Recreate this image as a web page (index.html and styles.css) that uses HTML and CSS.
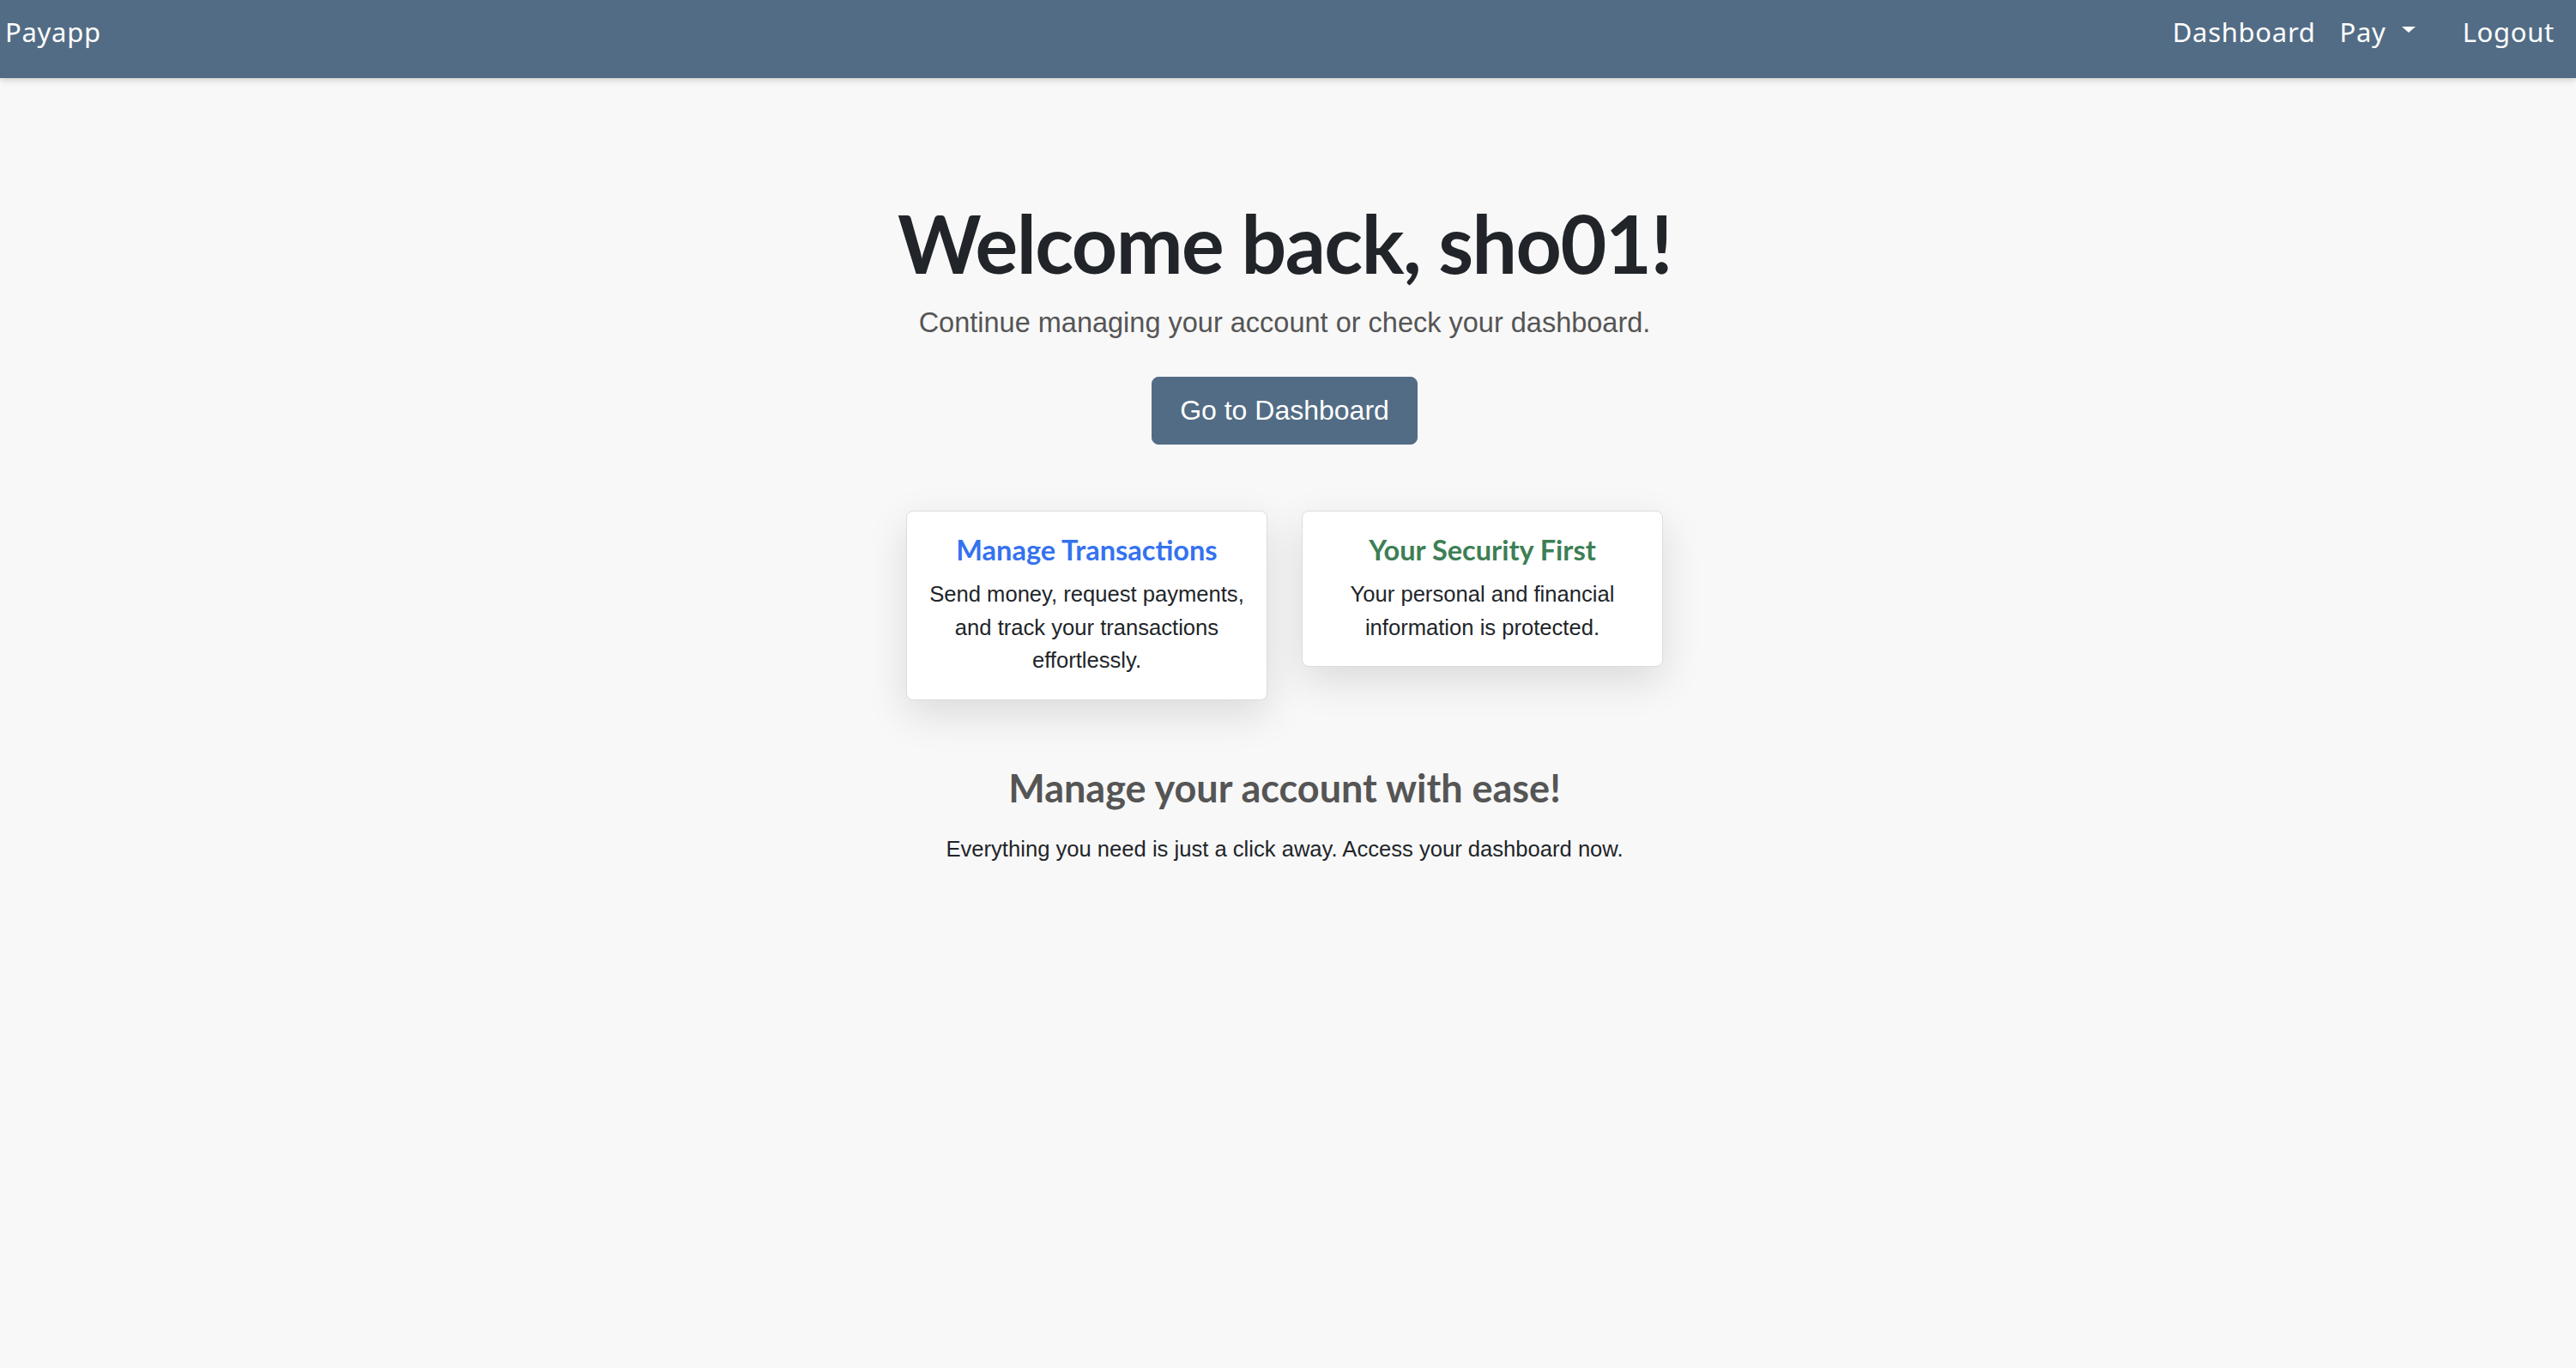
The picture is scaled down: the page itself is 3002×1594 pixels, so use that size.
FILE: index.html
```html
<!DOCTYPE html>
<html lang="en">
<head>
<meta charset="utf-8">
<title>Payapp</title>
<link rel="stylesheet" href="styles.css">
</head>
<body>
<nav class="navbar">
  <a class="brand" href="#">Payapp</a>
  <div class="nav-links">
    <a class="nav-link" href="#">Dashboard</a>
    <a class="nav-link dropdown" href="#">Pay<span class="caret"></span></a>
    <a class="nav-link logout" href="#">Logout</a>
  </div>
</nav>
<main class="main">
  <h1 class="welcome">Welcome back, sho01!</h1>
  <p class="lead">Continue managing your account or check your dashboard.</p>
  <a class="btn" href="#">Go to Dashboard</a>
  <div class="cards">
    <div class="card">
      <h5 class="card-title blue">Manage Transactions</h5>
      <p class="card-text">Send money, request payments, and track your transactions effortlessly.</p>
    </div>
    <div class="card">
      <h5 class="card-title green">Your Security First</h5>
      <p class="card-text">Your personal and financial information is protected.</p>
    </div>
  </div>
  <h2 class="ease">Manage your account with ease!</h2>
  <p class="ease-text">Everything you need is just a click away. Access your dashboard now.</p>
</main>
</body>
</html>
```

FILE: styles.css
```css
* { box-sizing: border-box; }
html, body { margin: 0; padding: 0; }
body {
  background: #f8f8f8;
  font-family: "Liberation Sans", Arial, sans-serif;
  color: #212529;
}
a { text-decoration: none; }

.navbar {
  height: 91px;
  background: #526c85;
  box-shadow: 0 2px 8px rgba(0,0,0,0.18);
  display: flex;
  justify-content: space-between;
  align-items: flex-start;
  padding: 16px 25px 0 6px;
  font-family: "Noto Sans", Lato, sans-serif;
  font-size: 31px;
  line-height: 42px;
  letter-spacing: 0.7px;
  color: #fff;
}
.brand { color: #fff; }
.nav-links { display: flex; align-items: flex-start; }
.nav-link { color: #fff; }
.dropdown { margin-left: 28px; display: flex; align-items: center; }
.caret {
  display: inline-block;
  margin-left: 18px;
  width: 0; height: 0;
  border-left: 8px solid transparent;
  border-right: 8px solid transparent;
  border-top: 7px solid #fff;
  position: relative;
  top: -3px;
}
.logout { margin-left: 55px; }

.main {
  display: flex;
  flex-direction: column;
  align-items: center;
  padding: 137px 8px 0 0;
}
.welcome {
  margin: 0 0 12px;
  font-family: Lato, sans-serif;
  font-weight: 700;
  font-size: 93px;
  letter-spacing: -1.5px;
  line-height: 1.2;
  color: #212529;
}
.lead {
  margin: 0 0 39px;
  font-size: 32.5px;
  line-height: 1.5;
  color: #555;
}
.btn {
  display: inline-block;
  background: #526c85;
  border: 1px solid #526c85;
  border-radius: 8px;
  color: #fff;
  font-size: 32px;
  line-height: 49px;
  padding: 14px 32px;
}
.cards {
  display: flex;
  align-items: flex-start;
  gap: 40px;
  margin-top: 77px;
}
.card {
  width: 421px;
  background: #fff;
  border: 1px solid #dcdcdc;
  border-radius: 8px;
  box-shadow: 0 16px 48px rgba(0,0,0,0.12);
  padding: 25px 25px 26px;
  text-align: center;
}
.card-title {
  margin: 0 0 13px;
  font-family: Lato, sans-serif;
  font-weight: 700;
  font-size: 32.5px;
  line-height: 1.2;
}
.blue { color: #3572ef; }
.green { color: #3d7f55; }
.card-text {
  margin: 0;
  font-size: 25.6px;
  line-height: 38.4px;
  color: #212529;
}
.ease {
  margin: 75px 0 25px;
  font-family: Lato, sans-serif;
  font-weight: 700;
  font-size: 45px;
  line-height: 1.2;
  color: #555;
}
.ease-text {
  margin: 0;
  font-size: 25.6px;
  line-height: 38.4px;
  color: #212529;
}
```
